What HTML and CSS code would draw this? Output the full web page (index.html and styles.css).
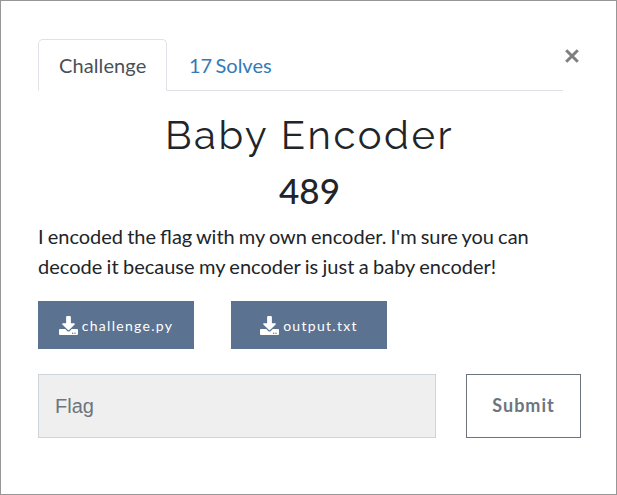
FILE: index.html
```html
<!DOCTYPE html>
<html lang="en">
<head>
<meta charset="utf-8">
<title>Baby Encoder</title>
<link rel="stylesheet" href="styles.css">
</head>
<body>
<main class="modal">
  <header class="top">
    <nav class="tabs">
      <a class="tab active">Challenge</a>
      <a class="tab">17 Solves</a>
    </nav>
    <button class="close" aria-label="Close"><svg viewBox="0 0 14 14"><path d="M1.2 1.2l11.6 11.6M12.8 1.2L1.2 12.8"/></svg></button>
  </header>
  <h2 class="name"><span>Baby Encoder</span></h2>
  <h3 class="value"><span>489</span></h3>
  <p class="desc">I encoded the flag with my own encoder. I'm sure you can <span class="second">decode it because my encoder is just a baby encoder!</span></p>
  <div class="files">
    <a class="file"><svg class="icon" viewBox="0 0 512 512"><path d="M216 0h80c13 0 24 11 24 24v168h88c18 0 27 21 14 34L270 378c-8 8-20 8-28 0L90 226c-13-13-4-34 14-34h88V24c0-13 11-24 24-24zm296 376v112c0 13-11 24-24 24H24c-13 0-24-11-24-24V376c0-13 11-24 24-24h147l49 49c20 20 52 20 72 0l49-49h147c13 0 24 11 24 24zm-124 88c0-11-9-20-20-20s-20 9-20 20 9 20 20 20 20-9 20-20zm64 0c0-11-9-20-20-20s-20 9-20 20 9 20 20 20 20-9 20-20z"/></svg><span>challenge.py</span></a>
    <a class="file"><svg class="icon" viewBox="0 0 512 512"><path d="M216 0h80c13 0 24 11 24 24v168h88c18 0 27 21 14 34L270 378c-8 8-20 8-28 0L90 226c-13-13-4-34 14-34h88V24c0-13 11-24 24-24zm296 376v112c0 13-11 24-24 24H24c-13 0-24-11-24-24V376c0-13 11-24 24-24h147l49 49c20 20 52 20 72 0l49-49h147c13 0 24 11 24 24zm-124 88c0-11-9-20-20-20s-20 9-20 20 9 20 20 20 20-9 20-20zm64 0c0-11-9-20-20-20s-20 9-20 20 9 20 20 20 20-9 20-20z"/></svg><span>output.txt</span></a>
  </div>
  <form class="answer">
    <input class="flag" type="text" placeholder="Flag">
    <button class="submit" type="button">Submit</button>
  </form>
</main>
</body>
</html>
```
FILE: styles.css
```css
* { box-sizing: border-box; }
body { margin: 0; background: #fff; }
.modal {
  width: 617px;
  height: 495px;
  padding: 38px 35px 0 37px;
  border: 1px solid #979797;
  font: 20px/30px Lato, sans-serif;
  color: #212529;
}
.top { display: flex; height: 52px; }
.tabs {
  display: flex;
  width: 525px;
  border-bottom: 1px solid #dee2e6;
}
.tab {
  height: 52px;
  padding: 10px 21px 0;
  border: 1px solid transparent;
  border-radius: 5px 5px 0 0;
  color: #337ab7;
  word-spacing: -1.8px;
}
.tab.active {
  width: 129px;
  padding: 10px 20px 0;
  border-color: #dee2e6 #dee2e6 #fff;
  color: #495057;
  letter-spacing: 0.1px;
}
.close {
  width: 18px;
  height: 18px;
  margin-top: 8px;
  padding: 2px;
  border: 0;
  background: none;
}
.close svg {
  display: block;
  width: 14px;
  height: 14px;
  overflow: visible;
  fill: none;
  stroke: #7f7f7f;
  stroke-width: 3;
}
.name {
  margin: 20px 0 0;
  font: 400 40px/48px Raleway, sans-serif;
  letter-spacing: 2.55px;
  text-align: center;
}
.value { margin: 10px 0 0; font: 500 35px/42px Lato, sans-serif; text-align: center; }
.desc { margin: 10px 0 0; word-spacing: -1.05px; }
.second { word-spacing: -0.75px; }
.files { display: flex; gap: 37px; margin-top: 20px; }
.file {
  display: flex;
  align-items: center;
  justify-content: center;
  gap: 4px;
  width: 156px;
  height: 48px;
  background: #5b7290;
  color: #fff;
  font-size: 14px;
  letter-spacing: 1.3px;
}
.file span { padding-top: 1px; }
.icon { width: 19px; height: 19px; fill: #fff; }
.answer { display: flex; gap: 30px; margin-top: 25px; }
.flag {
  width: 398px;
  height: 64px;
  padding: 0 16px;
  border: 1px solid #ced4da;
  border-radius: 0;
  background: #efefef;
  font: 20px "Liberation Sans", sans-serif;
}
.flag::placeholder { color: #6c757d; }
.submit {
  width: 115px;
  height: 64px;
  padding: 0 0 2px;
  border: 1px solid #6c757d;
  background: #fff;
  color: #6c757d;
  font: bold 18px Lato, sans-serif;
  letter-spacing: 1px;
}
```
